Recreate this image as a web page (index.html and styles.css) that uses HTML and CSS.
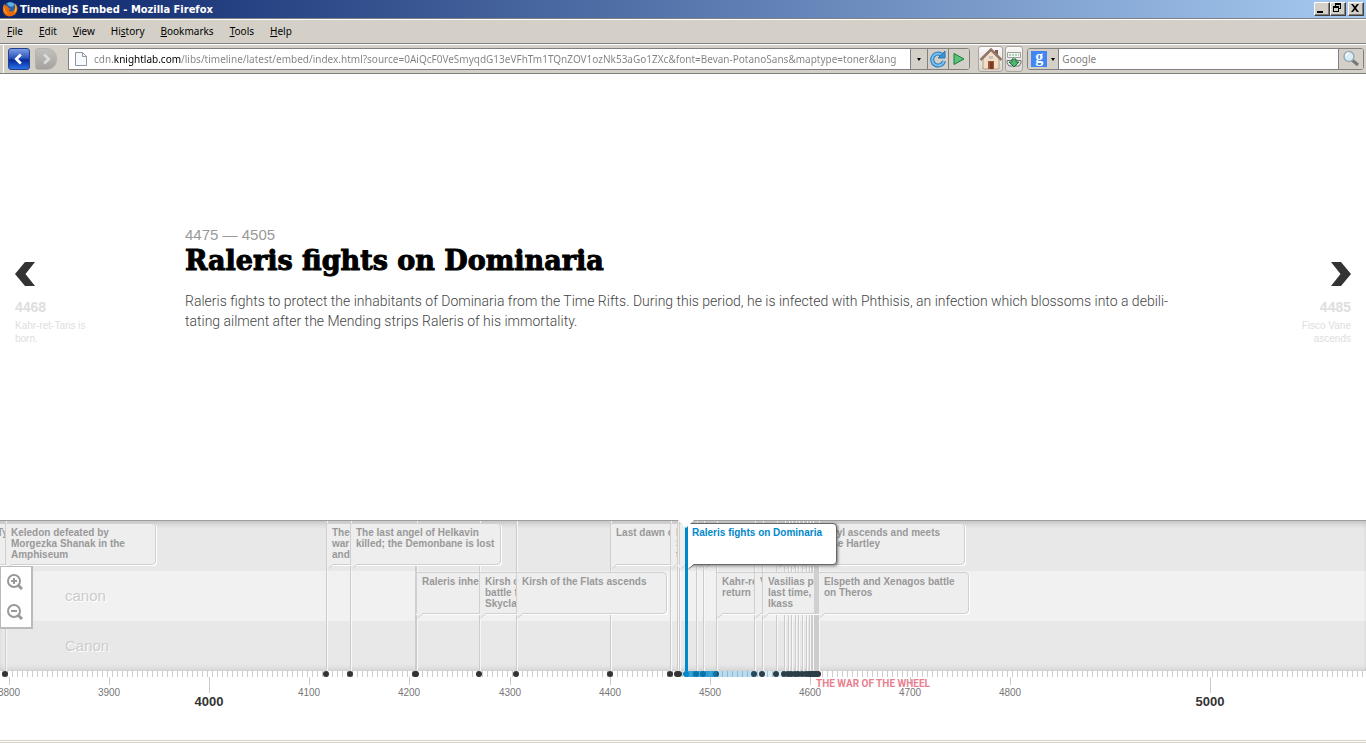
FILE: index.html
```
<!DOCTYPE html>
<html lang="en">
<head>
<meta charset="utf-8">
<title>TimelineJS Embed</title>
<link rel="stylesheet" href="styles.css">
</head>
<body>
<svg class="defs" aria-hidden="true">
  <symbol id="tail" viewBox="0 0 12 8"><path class="tail-fill" d="M0 0H12V2H6L1 7H0Z"/><path class="tail-line" d="M12 2.500H6L0.500 7"/></symbol>
</svg>

<header class="chrome">
  <div class="titlebar">
    <svg class="logo" viewBox="0 0 16 16"><circle cx="8" cy="7.500" r="6.500" fill="#2a5fa8"/><path d="M5 2.500C7 .5 11 1 13 3.500L10 6 7 5Z" fill="#5fb0e0"/><path d="M2 3C0 8 .5 12 4 14.500 9 17 15 14 15.500 8 15.500 5.500 14.500 3.500 13 2.500 13.500 5 13.500 7 12 9 10 11.500 7 10.500 6.500 9L9 8C7 7.500 6 7 6 5.500L4 5Z" fill="#e8690b"/><path d="M13 3C15.500 6 15 10 12 12.500 13.500 9 13.500 6 13 3ZM2 4C2 7 3 11 6 13 3 12 1 9 2 4Z" fill="#fbc52c"/></svg>
    <span class="title">TimelineJS Embed - Mozilla Firefox</span>
    <div class="winbtns">
      <button aria-label="Minimize"><svg viewBox="0 0 12 10"><path d="M2 8H8V10H2Z"/></svg></button>
      <button aria-label="Restore"><svg viewBox="0 0 12 10"><path fill-rule="evenodd" d="M4 0H10V6H8V5H9V2H5V3H4ZM2 3H8V9H2ZM3 5V8H7V5Z"/></svg></button>
      <button class="close" aria-label="Close"><svg viewBox="0 0 12 10"><path d="M2 1H4L6 3.500 8 1H10L7 5 10 9H8L6 6.500 4 9H2L5 5Z"/></svg></button>
    </div>
  </div>
  <nav class="menubar">
    <button><u>F</u>ile</button><button><u>E</u>dit</button><button><u>V</u>iew</button><button>Hi<u>s</u>tory</button><button><u>B</u>ookmarks</button><button><u>T</u>ools</button><button><u>H</u>elp</button>
  </nav>
  <div class="toolbar">
    <button class="go back" aria-label="Back"><svg viewBox="0 0 22 22"><path d="M13 6 8 11 13 16"/></svg></button>
    <button class="go forward" aria-label="Forward"><svg viewBox="0 0 22 22"><path d="M9 6 14 11 9 16"/></svg></button>
    <div class="field address">
      <svg class="page" viewBox="0 0 12 14"><path d="M.5.500H7.500L11.500 4.500V13.500H.5ZM7.500.500V4.500H11.500" fill="#f7f9fb" stroke="#8b97a5"/></svg>
      <input class="url" aria-label="Address" value="cdn.knightlab.com/libs/timeline/latest/embed/index.html?source=0AiQcF0VeSmyqdG13eVFhTm1TQnZOV1ozNk53aGo1ZXc&amp;font=Bevan-PotanoSans&amp;maptype=toner&amp;lang">
      <button class="cell drop" aria-label="History"></button>
      <button class="cell" aria-label="Reload"><svg viewBox="0 0 20 20"><path d="M15 7A6 6 0 1 0 16 12" fill="none" stroke="#2676bd" stroke-width="4"/><path d="M15 7A6 6 0 1 0 16 12" fill="none" stroke="#78c4f0" stroke-width="2"/><path d="M17 2V9H10Z" fill="#3d93d0" stroke="#2676bd"/></svg></button>
      <button class="cell" aria-label="Go"><svg viewBox="0 0 20 20"><path d="M5 4.500 15 10 5 15.500Z" fill="#5cc27c" stroke="#16803c"/></svg></button>
    </div>
    <button class="tool home" aria-label="Home"><svg viewBox="0 0 24 24"><path d="M16 3H19V9H16Z" fill="#8b5648"/><path d="M4 12 12 4 20 12V22H4Z" fill="#f0dfc6" stroke="#b79d85"/><path d="M1.500 13 12 2.500 22.500 13" fill="none" stroke="#92776d" stroke-width="2.500"/><path d="M9 14H15V22H9Z" fill="#9a5638"/><path d="M11 15H14V22H11Z" fill="#7b3824"/><path d="M10 9H14V12H10Z" fill="#c6c2bb"/></svg></button>
    <button class="tool" aria-label="Downloads"><svg viewBox="0 0 16 22"><path d="M1.500 4.500H14.500V9.500H1.500Z" fill="#f3f4f2" stroke="#9ba29d"/><path d="M3 7H13" stroke="#64b27c" stroke-dasharray="2 1"/><path d="M1 12.500H15V15L13 18H3L1 15Z" fill="#e2e5e4" stroke="#6c7477"/><path d="M6 11H10V14H13L8 19 3 14H6Z" fill="#54b56f" stroke="#16763b"/></svg></button>
    <div class="field search">
      <button class="cell engine" aria-label="Google"><span class="g">g</span><i></i></button>
      <input aria-label="Search" placeholder="Google">
      <button class="cell find" aria-label="Search"><svg viewBox="0 0 20 20"><path d="M11 11 17 16" stroke="#777" stroke-width="3"/><circle cx="8" cy="7.500" r="5" fill="#d9edf8" stroke="#9ba9b3" stroke-width="1.500"/><path d="M5 7A3 3 0 0 1 8 4" fill="none" stroke="#fff" stroke-width="1.500"/></svg></button>
    </div>
  </div>
</header>

<main class="slide">
  <a class="step prev" href="#prev">
    <svg viewBox="0 0 20 24"><path d="M10 0H20L10.500 12 20 24H10L0 12Z"/></svg>
    <strong>4468</strong><span>Kahr-ret-Taris is born.</span>
  </a>
  <article class="story">
    <p class="date">4475 — 4505</p>
    <h1>Raleris fights on Dominaria</h1>
    <p class="text">Raleris fights to protect the inhabitants of Dominaria from the Time Rifts. During this period, he is infected with Phthisis, an infection which blossoms into a debili&shy;tating ailment after the Mending strips Raleris of his immortality.</p>
  </article>
  <a class="step next" href="#next">
    <svg viewBox="0 0 20 24"><path d="M10 0H0L9.500 12 0 24H10L20 12Z"/></svg>
    <strong>4485</strong><span>Fisco Vane ascends</span>
  </a>
</main>

<section class="timeline">
  <div class="rows">
    <div class="row"></div><div class="row">canon</div><div class="row">Canon</div>
  </div>

  <div class="marker" style="left:-144px"><button class="flag">&nbsp;</button></div>
  <div class="marker" style="left:-9px"><button class="flag">Ty</button></div>
  <div class="marker" style="left:5px"><button class="flag">Keledon defeated by Morgezka Shanak in the Amphiseum</button><svg class="tail"><use href="#tail"/></svg></div>
  <div class="marker low" style="left:415px"><button class="flag"></button></div>
  <div class="marker low" style="left:416px"><button class="flag">Raleris inherits the Library</button><svg class="tail"><use href="#tail"/></svg></div>
  <div class="marker low" style="left:479px"><button class="flag">Kirsh of the<br>battle for the<br>Skyclaves</button><svg class="tail"><use href="#tail"/></svg></div>
  <div class="marker low" style="left:516px"><button class="flag">Kirsh of the Flats ascends</button><svg class="tail"><use href="#tail"/></svg></div>
  <div class="marker" style="left:326px"><button class="flag">The<br>war<br>and</button><svg class="tail"><use href="#tail"/></svg></div>
  <div class="marker" style="left:350px"><button class="flag">The last angel of Helkavin killed; the Demonbane is lost</button><svg class="tail"><use href="#tail"/></svg></div>
  <div class="marker" style="left:610px"><button class="flag">Last dawn of</button><svg class="tail"><use href="#tail"/></svg></div>
  <div class="marker" style="left:670px"><button class="flag">I<br>S<br>t</button><svg class="tail"><use href="#tail"/></svg></div>
  <div class="marker" style="left:677px"><button class="flag"></button><svg class="tail"><use href="#tail"/></svg></div>
  <div class="marker" style="left:679px"><button class="flag"></button><svg class="tail"><use href="#tail"/></svg></div>
  <div class="marker" style="left:696px"><button class="flag"></button><svg class="tail"><use href="#tail"/></svg></div>
  <div class="marker" style="left:703px"><button class="flag"></button><svg class="tail"><use href="#tail"/></svg></div>
  <div class="marker" style="left:776px"><button class="flag"></button><svg class="tail"><use href="#tail"/></svg></div>
  <div class="marker" style="left:784px"><button class="flag"></button><svg class="tail"><use href="#tail"/></svg></div>
  <div class="marker" style="left:788px"><button class="flag"></button></div>
  <div class="marker" style="left:791px"><button class="flag"></button><svg class="tail"><use href="#tail"/></svg></div>
  <div class="marker" style="left:795px"><button class="flag"></button></div>
  <div class="marker" style="left:798px"><button class="flag"></button></div>
  <div class="marker" style="left:802px"><button class="flag"></button><svg class="tail"><use href="#tail"/></svg></div>
  <div class="marker" style="left:806px"><button class="flag"></button></div>
  <div class="marker" style="left:809px"><button class="flag"></button></div>
  <div class="marker" style="left:811px"><button class="flag"></button></div>
  <div class="marker" style="left:812px"><button class="flag"></button></div>
  <div class="marker" style="left:814px"><button class="flag">Daryl ascends and meets Elise Hartley</button></div>
  <div class="marker low" style="left:716px"><button class="flag">Kahr-ret-Taris<br>return to</button><svg class="tail"><use href="#tail"/></svg></div>
  <div class="marker low" style="left:754px"><button class="flag">V</button><svg class="tail"><use href="#tail"/></svg></div>
  <div class="marker low" style="left:762px"><button class="flag">Vasilias plays one<br>last time, in<br>Ikass</button><svg class="tail"><use href="#tail"/></svg></div>
  <div class="marker low" style="left:814px"><button class="flag"></button></div>
  <div class="marker low" style="left:815px"><button class="flag"></button></div>
  <div class="marker low" style="left:816px"><button class="flag"></button></div>
  <div class="marker low" style="left:817px"><button class="flag"></button></div>
  <div class="marker low" style="left:818px"><button class="flag">Elspeth and Xenagos battle on Theros</button><svg class="tail"><use href="#tail"/></svg></div>
  <div class="marker active" style="left:685px"><button class="flag">Raleris fights on Dominaria</button><svg class="tail"><use href="#tail"/></svg></div>
  <svg class="pointer" viewBox="0 0 16 8"><path d="M0 0H16L8 8Z"/></svg>

  <div class="tools">
    <button aria-label="Zoom in"><svg viewBox="0 0 16 16"><circle cx="7" cy="7" r="6"/><path class="handle" d="M11 11 15 15"/><path d="M7 4V10M4 7H10"/></svg></button>
    <button aria-label="Zoom out"><svg viewBox="0 0 16 16"><circle cx="7" cy="7" r="6"/><path class="handle" d="M11 11 15 15"/><path d="M4 7H10"/></svg></button>
  </div>

  <div class="axis">
    <span class="span" style="left:686px;width:133px"></span><span class="span mid" style="left:686px;width:70px"></span><span class="span strong" style="left:686px;width:31px"></span>
    <span class="year" style="left:9px">3800</span><span class="year" style="left:109px">3900</span><span class="year major" style="left:209px">4000</span><span class="year" style="left:309px">4100</span><span class="year" style="left:409px">4200</span><span class="year" style="left:510px">4300</span><span class="year" style="left:610px">4400</span><span class="year" style="left:710px">4500</span><span class="year" style="left:810px">4600</span><span class="year" style="left:910px">4700</span><span class="year" style="left:1010px">4800</span><span class="year major" style="left:1210px">5000</span>
    <span class="era">The War of the Wheel</span>
  </div>
</section>
<footer class="status"></footer>
</body>
</html>
```
FILE: styles.css
```
* { box-sizing: border-box; }
body { margin: 0; min-height: 100vh; display: flex; flex-direction: column; background: #fff; font-family: "Liberation Sans", Arial, sans-serif; overflow-x: hidden; }
button { font: inherit; color: inherit; margin: 0; padding: 0; border: 0; background: none; }
input { font: inherit; border: 0; padding: 0; outline: 0; min-width: 0; }
.defs { position: absolute; width: 0; height: 0; }

.chrome { background: #d4d0c8; font-family: "Noto Sans", Tahoma, sans-serif; font-size: 10px; }
.titlebar { display: flex; align-items: center; height: 18px; padding: 0 2px; gap: 2px; background: linear-gradient(90deg, #0a246a, #a6caf0); color: #fff; font: bold 11px "DejaVu Sans Condensed", "DejaVu Sans", sans-serif; font-stretch: condensed; }
.logo { width: 16px; height: 16px; }
.title { flex: 1; }
.winbtns { display: flex; }
.winbtns button { width: 16px; height: 14px; background: #d4d0c8; border: 1px solid; border-color: #fff #404040 #404040 #fff; box-shadow: inset -1px -1px #808080; display: flex; }
.winbtns svg { width: 12px; height: 10px; }
.winbtns .close { margin-left: 2px; }
.menubar { display: flex; height: 26px; align-items: center; border-top: 1px solid #808080; border-bottom: 1px solid #808080; box-shadow: inset 0 1px #fff; gap: 16px; padding: 0 7px; }
.toolbar { display: flex; align-items: center; height: 30px; border-top: 1px solid #fff; border-bottom: 1px solid #808080; padding: 0 2px 0 8px; box-shadow: inset 3px 0 #d4d0c8, inset 4px 0 #fff; }
.go { width: 22px; height: 22px; border-radius: 3px; margin-right: 5px; background: linear-gradient(#7d9ce4, #2a55bd 45%, #08289a 55%, #2a70e8); border: 1px solid #20418f; display: flex; }
.forward { background: linear-gradient(#c2c1bd, #a3a29e); border-color: #b5b3ad; border-radius: 3px 10px 10px 3px; margin-right: 11px; }
.go svg { width: 20px; height: 20px; fill: none; stroke: #fff; stroke-width: 3; }
.forward svg { stroke: #dddcd8; }
.field { display: flex; align-items: stretch; height: 22px; border: 1px solid #808080; background: #fff; border-radius: 0 3px 3px 0; overflow: hidden; }
.address { flex: 904; margin-right: 8px; }
.page { width: 12px; height: 14px; margin: 3px 7px 0 6px; }
.url { flex: 1; -webkit-text-fill-color: transparent; background: linear-gradient(90deg, #808080 20px, #000 20px, #000 87px, #808080 87px) text; margin-right: 4px; }
.cell { width: 21px; background: #d4d0c8; border-left: 1px solid #808080; display: flex; align-items: center; justify-content: center; }
.cell svg { width: 20px; height: 20px; flex: none; }
.drop { width: 17px; }
.drop::after, .engine i { content: ""; border: 2px solid transparent; border-top: 3px solid #000; border-bottom: 0; }
.tool { width: 18px; height: 26px; border: 1px solid #aaa69f; border-radius: 3px; background: linear-gradient(#fafafa, #d9d6d0); margin-right: 4px; display: flex; align-items: center; justify-content: center; }
.tool svg { width: 16px; height: 22px; }
.home { width: 25px; margin-right: 2px; }
.home svg { width: 24px; height: 24px; flex: none; }
.search { flex: 336; border-radius: 3px; }
.search input { flex: 1; padding-left: 3px; }
.search input::placeholder { color: #808080; }
.engine { width: 31px; border: 0; border-right: 1px solid #808080; gap: 4px; }
.g { width: 16px; height: 16px; background: #4285f4; color: #fff; font: bold 16px/12px "Liberation Serif", serif; }
.find { width: 25px; }

.slide { flex: 1; display: flex; align-items: flex-start; justify-content: space-between; padding: 152px 15px 0; }
.step { width: 80px; margin-top: 36px; display: flex; flex-direction: column; color: #dedede; text-decoration: none; font-size: 10px; line-height: 13px; }
.step svg { width: 20px; height: 24px; fill: #333; margin-bottom: 12px; }
.step strong { font-size: 14px; line-height: 18px; margin-bottom: 3px; }
.next { align-items: flex-end; text-align: right; }
.next span { width: 60px; }
.story { width: 1000px; margin-left: 90px; margin-right: auto; }
.date { margin: 0; font-size: 15px; line-height: 18px; color: #999; }
h1 { margin: 0; font: bold 27px/34px "DejaVu Serif", serif; color: #000; -webkit-text-stroke: 1px #000; }
.text { margin: 13px 0 0; font: 300 14px/20px Roboto, sans-serif; color: #444; }

.timeline { position: relative; height: 220px; overflow: hidden; }
.rows { height: 151px; display: grid; grid-template-rows: 50px 50px 50px; background: #e8e8e8; border-top: 1px solid #bbb; }
.rows::after { content: ""; position: absolute; inset: 0 0 69px; box-shadow: inset 0 6px 6px -3px rgba(0,0,0,.2), inset 0 -6px 6px -5px rgba(0,0,0,.15); }
.row { padding-left: 65px; font-size: 15px; line-height: 49px; color: #ccc; text-shadow: 1px 1px #fff; }
.row:nth-child(2) { background: #f1f1f1; }
.marker { position: absolute; top: 1px; width: 151px; height: 156px; }
.marker::before { content: ""; position: absolute; left: 0; top: 0; height: 150px; width: 2px; background: linear-gradient(90deg, #ccc 1px, #f7f7f7 1px); }
.marker::after { content: ""; position: absolute; left: -3px; bottom: 0; width: 6px; height: 6px; border-radius: 3px; background: #333; z-index: 3; }
.flag { position: absolute; z-index: 1; left: 0; top: 2px; width: 151px; height: 42px; padding: 3px 2px 3px 5px; text-align: left; display: flex; font: bold 10px/11px "Liberation Sans", sans-serif; color: #999; background: #eee; border: 1px solid #d0d0d0; border-radius: 0 4px 4px 0; box-shadow: 1px 1px #fff; overflow: hidden; }
.low .flag { top: 51px; }
.tail { position: absolute; z-index: 1; left: 1px; top: 41px; width: 12px; height: 8px; }
.low .tail { top: 90px; }
.tail-fill { fill: var(--tail-fill, #eee); }
.tail-line { fill: none; stroke: var(--tail-line, #d0d0d0); }
.active::before { width: 3px; background: #0088cc; z-index: 3; }
.active::after { left: -2px; background: #0088cc; }
.active .flag { z-index: 2; left: 1px; color: #0088cc; background: #fff; border-color: #666; box-shadow: 1px 1px 3px rgba(0,0,0,.5); }
.active .tail { z-index: 2; left: 3px; --tail-fill: #fff; --tail-line: #666; }
.pointer { position: absolute; z-index: 4; left: 678px; top: 0; width: 16px; height: 8px; fill: #fff; }
.tools { position: absolute; z-index: 4; left: 0; top: 46px; width: 33px; height: 63px; background: #fff; border: 1px solid #bbb; border-width: 1px 2px 2px 1px; display: flex; flex-direction: column; }
.tools button { height: 30px; padding: 6px; }
.tools svg { width: 16px; height: 16px; fill: none; stroke: #999; stroke-width: 2; display: block; }
.tools .handle { stroke-width: 3; }
.axis { position: relative; height: 69px; }
.axis::before { content: ""; display: block; height: 6px; background: repeating-linear-gradient(90deg, transparent 0 2px, #ccc 2px 3px, transparent 3px 5px); }
.span { position: absolute; z-index: 3; top: 0; height: 6px; background: rgba(0,136,204,.15); }
.mid { background: rgba(0,136,204,.15); }
.strong { background: rgba(0,136,204,.7); }
.year { position: absolute; top: 6px; width: 60px; margin-left: -30px; padding-top: 9px; text-align: center; font: 10px/13px "Liberation Sans", sans-serif; color: #777; }
.year::before { content: ""; position: absolute; left: 30px; top: 0; width: 1px; height: 8px; background: #ccc; }
.major { padding-top: 18px; font: bold 13px/13px "Liberation Sans", sans-serif; color: #333; }
.major::before { height: 16px; }
.era { position: absolute; left: 816px; top: 7px; font: bold 10px/12px Roboto, sans-serif; color: #e8808f; text-transform: uppercase; white-space: nowrap; }
.status { height: 3px; border: 1px solid #d4d0c8; border-width: 1px 0; }
```
